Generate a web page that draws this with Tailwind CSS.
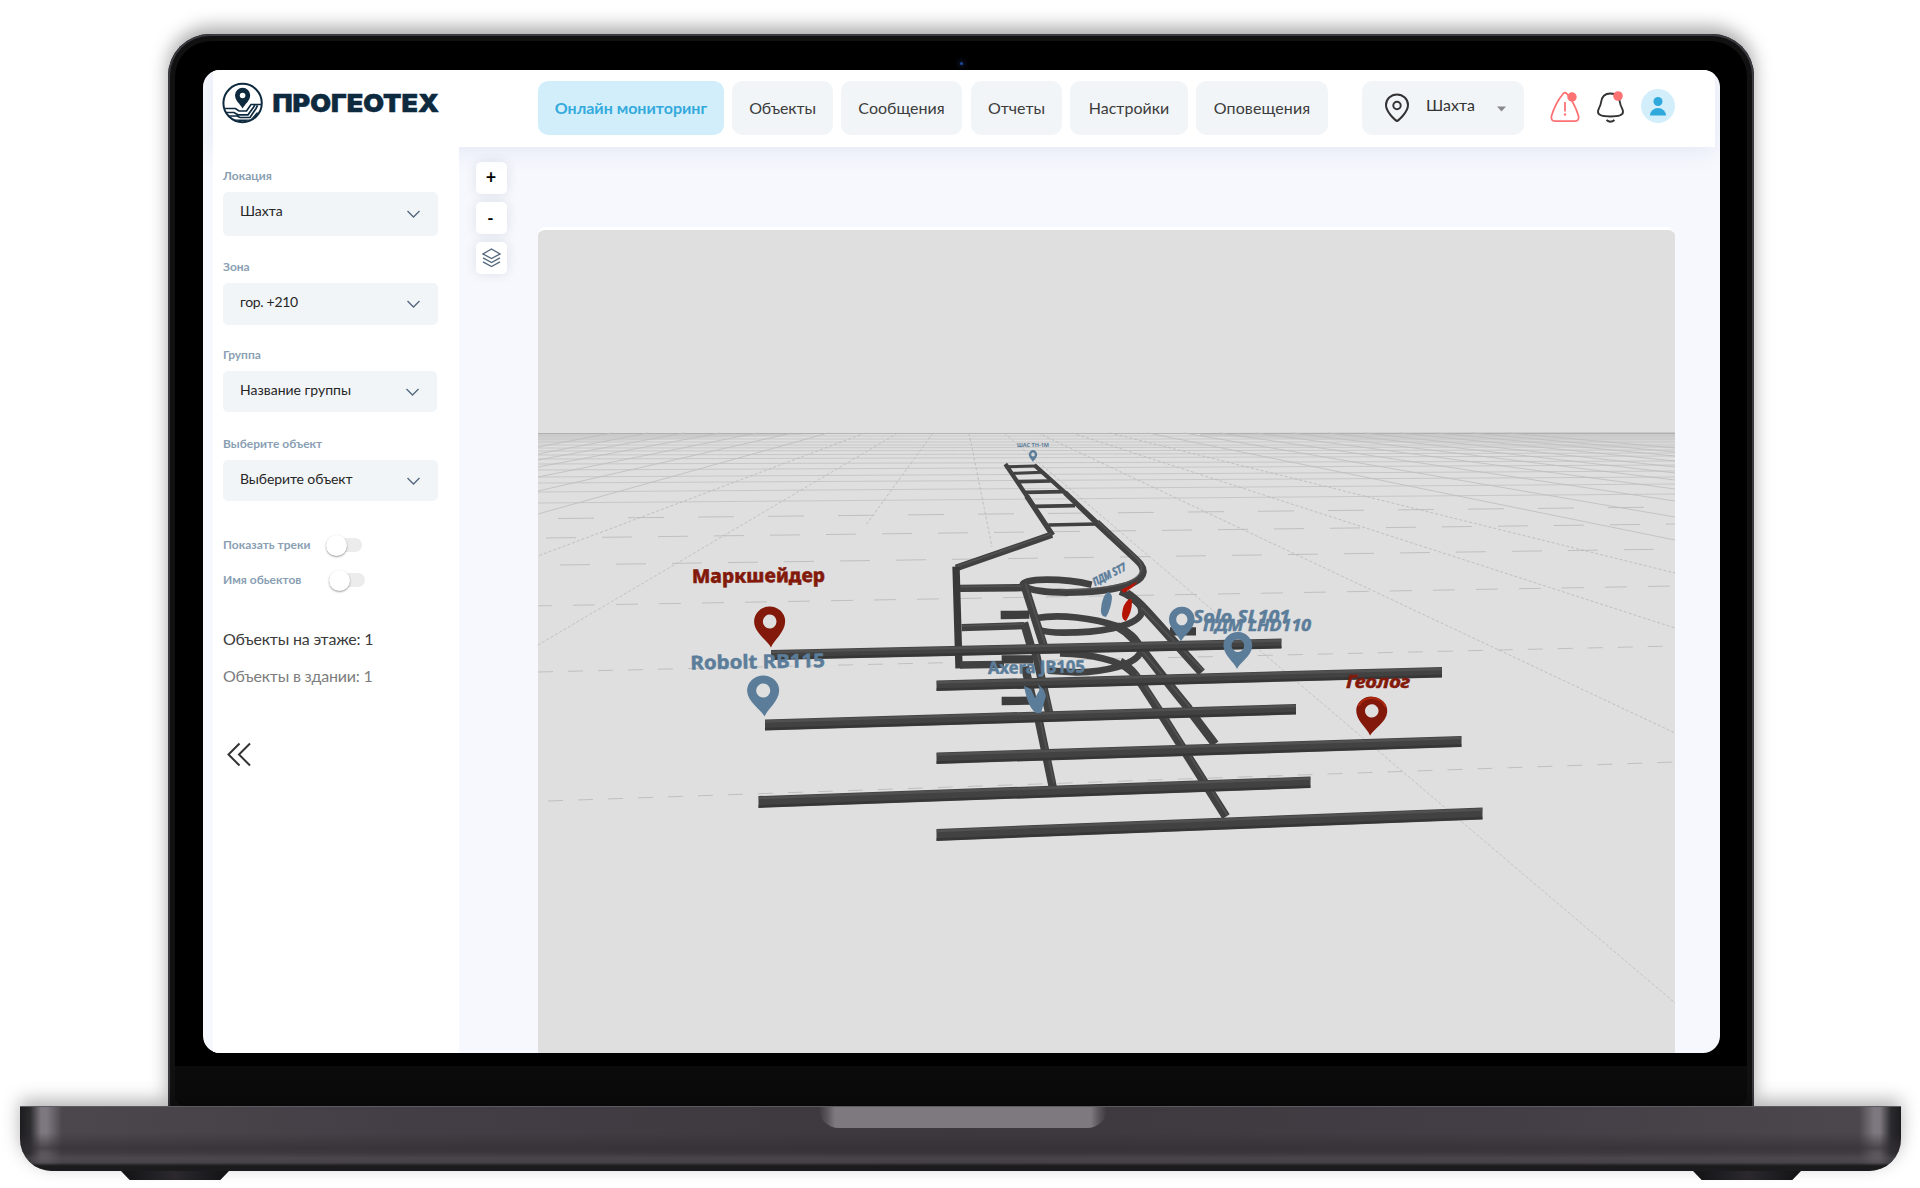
<!DOCTYPE html>
<html lang="ru">
<head>
<meta charset="utf-8">
<title>ПРОГЕОТЕХ</title>
<script src="https://cdn.jsdelivr.net/npm/@tailwindcss/browser@4"></script>
</head>
<body class="bg-white w-[1920px] h-[1188px] overflow-hidden font-['Lato','Open_Sans',sans-serif] text-[#333]">
<div class="flex flex-col pt-[34px]">

  <!-- laptop lid -->
  <div class="ml-[168px] w-[1586px] h-[1072px] rounded-t-[42px] bg-black shadow-[0_-7px_18px_rgba(0,0,0,0.34)] flex flex-col">
   <div class="w-full h-full rounded-t-[42px] border-x-2 border-t-2 border-[#3b3a40] bg-[#111] flex flex-col px-[5px] pt-[5px]">
    <div class="rounded-t-[36px] bg-black h-[1025px] shrink-0 px-[28px]">
      <div class="h-[29px] flex justify-center items-end pb-[5px]"><span class="w-[3px] h-[3px] rounded-full bg-[#1c4a9c] shadow-[0_0_5px_2px_#10162e]"></span></div>

      <!-- screen -->
      <div class="w-[1517px] h-[983px] rounded-[17px] overflow-hidden bg-[#f6f8fd] pl-[10px] pr-[5px] flex flex-col">
        <header class="h-[77px] shrink-0 bg-white flex items-start relative z-10 shadow-[0_4px_22px_rgba(80,100,170,0.10)]">
          <svg class="ml-[9px] mt-[11px] shrink-0" width="220" height="44" viewBox="222 81 220 44">
            <clipPath id="lg"><circle cx="242.600" cy="103" r="18.500"/></clipPath>
            <circle cx="242.600" cy="103" r="19.200" fill="none" stroke="#0e2a3f" stroke-width="2"/>
            <path d="M242.600 108.500C240 103.500 235 101 235 95a7.600 7.200 0 0 1 15.200 0C250.200 101 245.200 103.500 242.600 108.500Z" fill="#0e2a3f"/>
            <circle cx="242.600" cy="95.500" r="2.800" fill="#fff"/>
            <g clip-path="url(#lg)" fill="none" stroke="#0e2a3f" stroke-width="1.700">
              <path d="M222 108.500h13.500l3.500 2.500h7.500l4.500-6.500h13M222 112.500h12l4 2.300h10l5.500-7.500 1.500-2.500M226 116h11l3 1.500h10l6-9 1.500-3M230 120.300h21l6-7h5"/>
            </g>
            <text x="272.500" y="112" textLength="166.500" lengthAdjust="spacingAndGlyphs" font-family="Inter" font-weight="900" font-size="25" fill="#0e2a3f" stroke="#0e2a3f" stroke-width=".5">ПРОГЕОТЕХ</text>
          </svg>
          <nav class="ml-[96px] mt-[11px] flex text-[16px] leading-[54px] text-center whitespace-nowrap text-[#3c3c3c]">
            <a class="w-[186px] h-[54px] mr-[8px] rounded-[10px] bg-[#d2eefb] text-[#34aadc] font-bold">Онлайн мониторинг</a>
            <a class="w-[101px] mr-[8px] rounded-[10px] bg-[#f1f5f8] tracking-[-0.1px]">Объекты</a>
            <a class="w-[121px] mr-[9px] rounded-[10px] bg-[#f1f5f8]">Сообщения</a>
            <a class="w-[91px] mr-[8px] rounded-[10px] bg-[#f1f5f8]">Отчеты</a>
            <a class="w-[118px] mr-[8px] rounded-[10px] bg-[#f1f5f8]">Настройки</a>
            <a class="w-[132px] rounded-[10px] bg-[#f1f5f8] tracking-[0.1px]">Оповещения</a>
          </nav>
          <div class="ml-[34px] mt-[11px] w-[162px] h-[54px] rounded-[10px] bg-[#f1f5f8] flex items-center text-[16px]">
            <svg class="ml-[22px]" width="26" height="30" viewBox="0 0 26 30" fill="none" stroke="#333" stroke-width="2"><path d="M13 28C11 27 2 19 2 12a11 10.500 0 0 1 22 0C24 19 15 27 13 28Z"/><circle cx="13" cy="12.500" r="3.700"/></svg>
            <span class="ml-[16px] w-[48px] -mt-[6px]">Шахта</span>
            <svg class="ml-[23px] mt-[1px]" width="9" height="6"><path d="M0 .5h9L4.500 5.500Z" fill="#8a8a8a"/></svg>
          </div>
          <svg class="ml-[26px] mt-[19px] shrink-0" width="30" height="34" viewBox="1550 89 30 34" fill="none" stroke="#fe7274" stroke-width="1.800"><path d="M1562.500 94.500q2.500-3.500 5 0q7 8.500 11 21.500q1 5-3.500 5.200h-20q-4.500-.2-3.500-5.200q4-13 11-21.500Z"/><path d="M1565 102v9.500"/><circle cx="1565" cy="114.500" r="1.200" fill="#fe7274" stroke="none"/><circle cx="1572" cy="97" r="4.700" fill="#fe7274" stroke="none"/></svg>
          <svg class="ml-[16px] mt-[19px] shrink-0" width="30" height="36" viewBox="1596 89 30 36" fill="none" stroke="#333" stroke-width="1.900"><path d="M1610.500 93.500C1603 93.500 1601.500 98 1601 102.500C1600.500 107 1598 108 1598 112C1598 115 1603 116.500 1610.500 116.500S1623 115 1623 112C1623 108 1620.500 107 1620 102.500C1619.500 98 1618 93.500 1610.500 93.500ZM1606.500 120q4 3.500 8 0"/><circle cx="1618" cy="96" r="4.800" fill="#fe7274" stroke="none"/></svg>
          <svg class="ml-[15px] mt-[19px] shrink-0" width="34" height="34" viewBox="0 0 34 34"><circle cx="17" cy="17" r="17" fill="#d2eefb"/><g fill="#2fa9dc"><circle cx="17" cy="12.500" r="4.500"/><path d="M9 26.500a8 7.500 0 0 1 16 0Z"/></g></svg>
        </header>

        <div class="flex grow min-h-0">
          <aside class="w-[246px] shrink-0 bg-white pl-[10px] relative z-20 flex flex-col items-start text-[12px] leading-[14px] font-bold text-[#8a9fb3] whitespace-nowrap">
            <p class="mt-[22px]">Локация</p>
            <div class="mt-[9px] w-[215px] h-[44px] rounded-[5px] bg-[#f1f5f8] flex items-center pl-[17px] pr-[18px] justify-between text-[14px] font-normal text-[#262626]"><span class="-mt-[7px]">Шахта</span><svg width="13" height="8" fill="none" stroke="#54697f" stroke-width="1.400"><path d="M.5 1l6 6l6-6"/></svg></div>
            <p class="mt-[24px]">Зона</p>
            <div class="mt-[9px] w-[215px] h-[42px] rounded-[5px] bg-[#f1f5f8] flex items-center pl-[17px] pr-[18px] justify-between text-[14px] font-normal text-[#262626]"><span class="-mt-[4px] tracking-[-0.3px]">гор. +210</span><svg width="13" height="8" fill="none" stroke="#54697f" stroke-width="1.400"><path d="M.5 1l6 6l6-6"/></svg></div>
            <p class="mt-[23px]">Группа</p>
            <div class="mt-[9px] w-[214px] h-[41px] rounded-[5px] bg-[#f1f5f8] flex items-center pl-[17px] pr-[18px] justify-between text-[14px] font-normal text-[#262626]"><span class="-mt-[4px]">Название группы</span><svg width="13" height="8" fill="none" stroke="#54697f" stroke-width="1.400"><path d="M.5 1l6 6l6-6"/></svg></div>
            <p class="mt-[25px]">Выберите объект</p>
            <div class="mt-[9px] w-[215px] h-[41px] rounded-[5px] bg-[#f1f5f8] flex items-center pl-[17px] pr-[18px] justify-between text-[14px] font-normal text-[#262626]"><span class="-mt-[4px] tracking-[-0.1px]">Выберите объект</span><svg width="13" height="8" fill="none" stroke="#54697f" stroke-width="1.400"><path d="M.5 1l6 6l6-6"/></svg></div>
            <div class="mt-[33px] h-[22px] flex items-center"><span class="w-[103px]">Показать треки</span><span class="w-[36px] h-[14px] rounded-full bg-[#ececec] flex items-center"><i class="w-[21px] h-[21px] shrink-0 rounded-full bg-white shadow-[0_1px_2px_rgba(0,0,0,0.4)]"></i></span></div>
            <div class="mt-[13px] h-[22px] flex items-center"><span class="w-[106px]">Имя обьектов</span><span class="w-[36px] h-[14px] rounded-full bg-[#ececec] flex items-center"><i class="w-[21px] h-[21px] shrink-0 rounded-full bg-white shadow-[0_1px_2px_rgba(0,0,0,0.4)]"></i></span></div>
            <p class="mt-[38px] text-[16px] leading-[20px] font-normal tracking-[-0.2px] text-[#3b3b3b]">Объекты на этаже: 1</p>
            <p class="mt-[17px] text-[16px] leading-[20px] font-normal tracking-[-0.2px] text-[#7d7d7d]">Объекты в здании: 1</p>
            <svg class="mt-[56px] ml-[4px]" width="25" height="25" fill="none" stroke="#333" stroke-width="2"><path d="M12.500 1.500L1.500 12.500L12.500 23.500M23 1.500L12 12.500L23 23.500"/></svg>
          </aside>

          <main class="grow flex pl-[17px] min-w-0">
            <div class="mt-[15px] w-[31px] flex flex-col gap-[8px] text-black font-bold text-center">
              <button class="h-[32px] rounded-[5px] bg-white shadow-[0_0_12px_rgba(60,60,100,0.12)] text-[18px] leading-[28px] pr-[1px] pb-[3px]">+</button>
              <button class="h-[32px] rounded-[5px] bg-white shadow-[0_0_12px_rgba(60,60,100,0.12)] text-[17px] pr-[2px]">-</button>
              <button class="h-[32px] rounded-[5px] bg-white shadow-[0_0_12px_rgba(60,60,100,0.12)] flex items-center justify-center"><svg width="19" height="20" viewBox="0 0 19 20" fill="none" stroke="#54697f" stroke-width="1.400"><path d="M9.500 1L18 6L9.500 10.500L1 6ZM1 9.800l8.500 4.700L18 9.800M1 13.800l8.500 4.700L18 13.800"/></svg></button>
            </div>
            <div class="ml-[31px] mt-[80px] w-[1137px] rounded-t-[8px] bg-[#dfdfdf] border-t-[3px] border-white overflow-hidden">
              <svg width="1137" height="823" viewBox="538 230 1137 823">
                <defs>
                  <linearGradient id="haze" x1="0" y1="0" x2="0" y2="1"><stop offset="0" stop-color="#a8a8a8" stop-opacity=".45"/><stop offset="1" stop-color="#c8c8c8" stop-opacity="0"/></linearGradient>
                  <path id="pin" fill-rule="evenodd" d="M0 0C-3-7-16-15-16-26A16 15 0 0 1 16-26C16-15 3-7 0 0ZM0-33a7 7 0 1 0 .1 0Z"/>
                </defs>
                <path d="M538 433.500H1675" stroke="#b4b4b4"/>
                <path d="M1200 433L1675 432V452L1200 436ZM538 433H850L538 444Z" fill="url(#haze)"/>
                <g fill="none" stroke="#c0c0c0" stroke-width="1">
                  <g stroke-dasharray="15 15"><path d="M548 801L1675 762M538 672L1675 646"/></g>
                  <g stroke-dasharray="22 21"><path d="M530 606L1675 586"/></g>
                  <g stroke-dasharray="30 26"><path d="M560 565L1675 549M546 538L1675 524"/></g>
                  <path stroke-dasharray="36 34" d="M558 518.500L1675 507"/>
                  <path d="M538 503L1675 494M538 492L1675 484M538 483L1675 477M538 477L1675 471M538 470L1675 465M538 464L1675 461M538 459L1675 456M538 455L1675 453M538 451L1675 450M538 448L1675 447M538 445H1675M538 442H1675M538 439H1675M538 436H1675" stroke="#c7c7c7"/>
                </g>
                <g fill="none" stroke="#b8b8b8" stroke-width=".8" stroke-dasharray="3 2">
                  <path d="M1004 433L1675 1003M898 433L538 645" stroke="#bababa"/>
                  <path d="M1038 433L1675 733M1072 433L1675 628M1110 433L1675 573M865 433L538 556M933 433L866 525M969 433L992 547"/>
                </g>
                <g fill="none" stroke="#bdbdbd" stroke-width=".8">
                  <path d="M1148 433L1675 540M1184 433L1675 517M1220 433L1675 501M1256 433L1675 489M1292 433L1675 480M1328 433L1675 473M1364 433L1675 467M1400 433L1675 461M1436 433L1675 456M1472 433L1675 452M1508 433L1675 448M828 433L538 514M792 433L538 491M757 433L538 477M720 433L538 467M684 433L538 460M648 433L538 454M612 433L538 447"/>
                </g>

                <g transform="translate(920 420) scale(.33333)" fill="none" stroke="#414141" stroke-linejoin="round">
                  <!-- ladder -->
                  <path stroke-width="9" d="M256 140L345 138M280 160L365 157"/>
                  <path stroke-width="11" d="M293 185L392 183M315 217L432 215M345 259L465 257M385 315L530 312"/>
                  <path stroke-width="13" d="M256 132L327 238M343 135L440 222"/>
                  <path stroke-width="16" d="M320 228L398 346M435 218L540 318"/>
                  <path stroke-width="20" d="M396 344L108 444"/>
                  <path stroke-width="21" d="M530 308L650 420C685 452 672 480 620 496C560 514 480 518 420 517C360 515 318 508 308 494"/>
                  <path stroke-width="22" stroke="#393939" d="M108 440L117 745"/>
                  <!-- spiral rings -->
                  <path stroke-width="20" d="M308 494C310 474 430 474 515 494M600 515C650 535 672 560 662 585C640 620 540 638 430 638C395 638 370 634 350 628M350 594C420 582 520 594 590 618C640 640 665 670 660 700C640 735 560 755 470 757L385 752M420 700C520 703 590 718 630 752"/>
                  <path stroke-width="22" d="M120 505L308 503M125 623L312 617M120 735L252 733"/>
                  <path stroke-width="25" d="M242 585L328 584M245 718L340 718M245 843L330 842M750 634L828 634" stroke="#3d3d3d"/>
                  <!-- inclined ramps -->
                  <path stroke-width="25" d="M312 492L372 680M312 608L336 690M345 690L390 890M315 740L340 850M352 880L398 1100"/>
                  <path stroke-width="26" d="M620 520C660 545 680 575 845 757M590 618C650 650 660 690 808 868M600 725C650 760 650 770 715 868M715 868L918 1190M800 860L885 972"/>
                  <!-- lit edges -->
                  <g stroke="#5e5e5e" stroke-opacity=".55" stroke-width="5">
                    <path d="M394 341L112 439M534 306L652 416C676 440 668 468 620 488C560 506 480 510 420 509M122 500L305 498M125 618L310 612M316 490L376 676M350 690L394 880M356 880L402 1090M664 562L850 752M664 690L812 864M650 760L720 864L922 1186"/>
                  </g>
                </g>
                <!-- horizontal drifts -->
                <g fill="#424242">
                  <path d="M771 650L1281.500 638.500V648.500L771 660Z"/>
                  <path d="M936.500 680.500L1442 667V677.500L936.500 691Z"/>
                  <path d="M765 719.500L1296 704V714.500L765 730.500Z"/>
                  <path d="M936.500 752.500L1461.500 736V747L936.500 764Z"/>
                  <path d="M758.500 796L1310.500 776.500V788L758.500 808Z"/>
                  <path d="M936.500 829L1482.500 807.500V819.500L936.500 841Z"/>
                </g>
                <g stroke="#5b5b5b" stroke-width="2.500" stroke-opacity=".6">
                  <path d="M771 652L1281.500 640.500M936.500 682.500L1442 669M765 721.500L1296 706M936.500 754.500L1461.500 738M758.500 798L1310.500 778.500M936.500 831L1482.500 809.500"/>
                </g>
                <g stroke="#2f2f2f" stroke-width="2.500" stroke-opacity=".6">
                  <path d="M771 658.500L1281.500 647M936.500 689.500L1442 676M765 729L1296 713M936.500 762.500L1461.500 745.500M758.500 806.500L1310.500 786.500M936.500 839.500L1482.500 818"/>
                </g>

                <!-- markers -->
                <g fill="#82190a">
                  <use href="#pin" transform="translate(771 647.500) rotate(-3) scale(.97 1)"/>
                  <g transform="translate(1370 735.500) rotate(4) scale(.97 .95)"><use href="#pin"/><path d="M-14-30A15 14 0 0 1 14-31" fill="none" stroke="#b02a10" stroke-width="2"/></g>
                </g>
                <g fill="#5b7d9a">
                  <use href="#pin" transform="translate(764.500 716.500) rotate(-3)"/>
                  <use href="#pin" transform="translate(1181 641.500) rotate(2) scale(.8 .85)"/>
                  <use href="#pin" transform="translate(1237 669) rotate(2) scale(.9 .9)"/>
                  <use href="#pin" transform="translate(1033 462) scale(.26 .29)"/>
                  <path d="M1108 592q4 1 4 6q-1 11-6 19q-6-1-5-8q1-13 7-17ZM1024 686l7 3l4 9l5-9l-2-5l6 6l2 6l-5 17h-5q-8-5-12-27Z"/>
                </g>
                <path d="M1128 600q4-3 4 2q0 10-6 19q-4-1-4-7q1-10 6-14ZM1121 590l6-3l11-6l-5 6l-9 6Z" fill="#b51405"/>
                <g font-family="'Noto Sans',sans-serif" font-weight="700" fill="#5b7d9a" stroke="#5b7d9a" stroke-width=".5" font-size="18">
                  <text x="692" y="583" font-size="19" font-weight="800" fill="#82190a" stroke="#82190a" textLength="133" lengthAdjust="spacingAndGlyphs" transform="rotate(-.5 692 583)">Маркшейдер</text>
                  <text x="690.500" y="669.500" font-size="19" textLength="134.500" lengthAdjust="spacingAndGlyphs" transform="rotate(-1 690 669)">Robolt RB115</text>
                  <text x="988" y="674" font-size="17" textLength="97" lengthAdjust="spacingAndGlyphs" transform="rotate(-1 988 674)">Axera JB105</text>
                  <text x="1193" y="622.500" font-style="italic" font-size="17" textLength="97" lengthAdjust="spacingAndGlyphs">Solo SL101</text>
                  <text x="1203" y="631" font-style="italic" font-size="16" textLength="108" lengthAdjust="spacingAndGlyphs">ПДМ LHD110</text>
                  <text x="1346" y="688" font-style="italic" font-size="17" fill="#82190a" stroke="#82190a" textLength="64" lengthAdjust="spacingAndGlyphs">Геолог</text>
                  <text x="1017" y="447" font-size="6" stroke="none" textLength="32" lengthAdjust="spacingAndGlyphs">ШАС ТН-1М</text>
                  <text x="0" y="0" font-size="11" font-style="italic" textLength="36" lengthAdjust="spacingAndGlyphs" transform="translate(1095 586) rotate(-27)">ПДМ ST7</text>
                </g>
              </svg>
            </div>
          </main>
        </div>
      </div>
    </div>
    <div class="grow bg-[#0b0b0b] rounded-b-[10px]"></div>
   </div>
  </div>

  <!-- laptop base -->
  <div class="ml-[20px] w-[1881px] h-[65px] rounded-b-[32px] border-t border-[#5d5a60] overflow-hidden shadow-[0_-6px_18px_rgba(0,0,0,0.3)] bg-[linear-gradient(180deg,#45414700_0%,#45414700_40%,#332f34b0_64%,#35313680_72%,#4d494fb0_80%,#464248c0_87%,#1b1a1c_92%,#1b1a1c_100%),linear-gradient(90deg,#1c1b1e_0,#2b2a2d_10px,#7d787f_21px,#7d787f_27px,#4b474d_42px,#433e45_400px,#3d383e_50%,#433e45_1481px,#4b474d_1839px,#7d787f_1854px,#7d787f_1860px,#2b2a2d_1871px,#1c1b1e_1881px)] flex justify-center items-start">
    <div class="ml-[4px] w-[290px] h-[21px] rounded-b-[22px] bg-[linear-gradient(90deg,#39353a,#59555b_9px,#7e787f_17px,#7e787f_273px,#59555b_281px,#39353a)]"></div>
  </div>
  <div class="flex justify-between pl-[121px] pr-[119px]">
    <div class="w-[108px] h-[9px] bg-[linear-gradient(90deg,#121214,#2b292e_50%,#121214)] [clip-path:polygon(0_0,100%_0,92%_100%,8%_100%)]"></div>
    <div class="w-[108px] h-[9px] bg-[linear-gradient(90deg,#121214,#2b292e_50%,#121214)] [clip-path:polygon(0_0,100%_0,92%_100%,8%_100%)]"></div>
  </div>
</div>
</body>
</html>
